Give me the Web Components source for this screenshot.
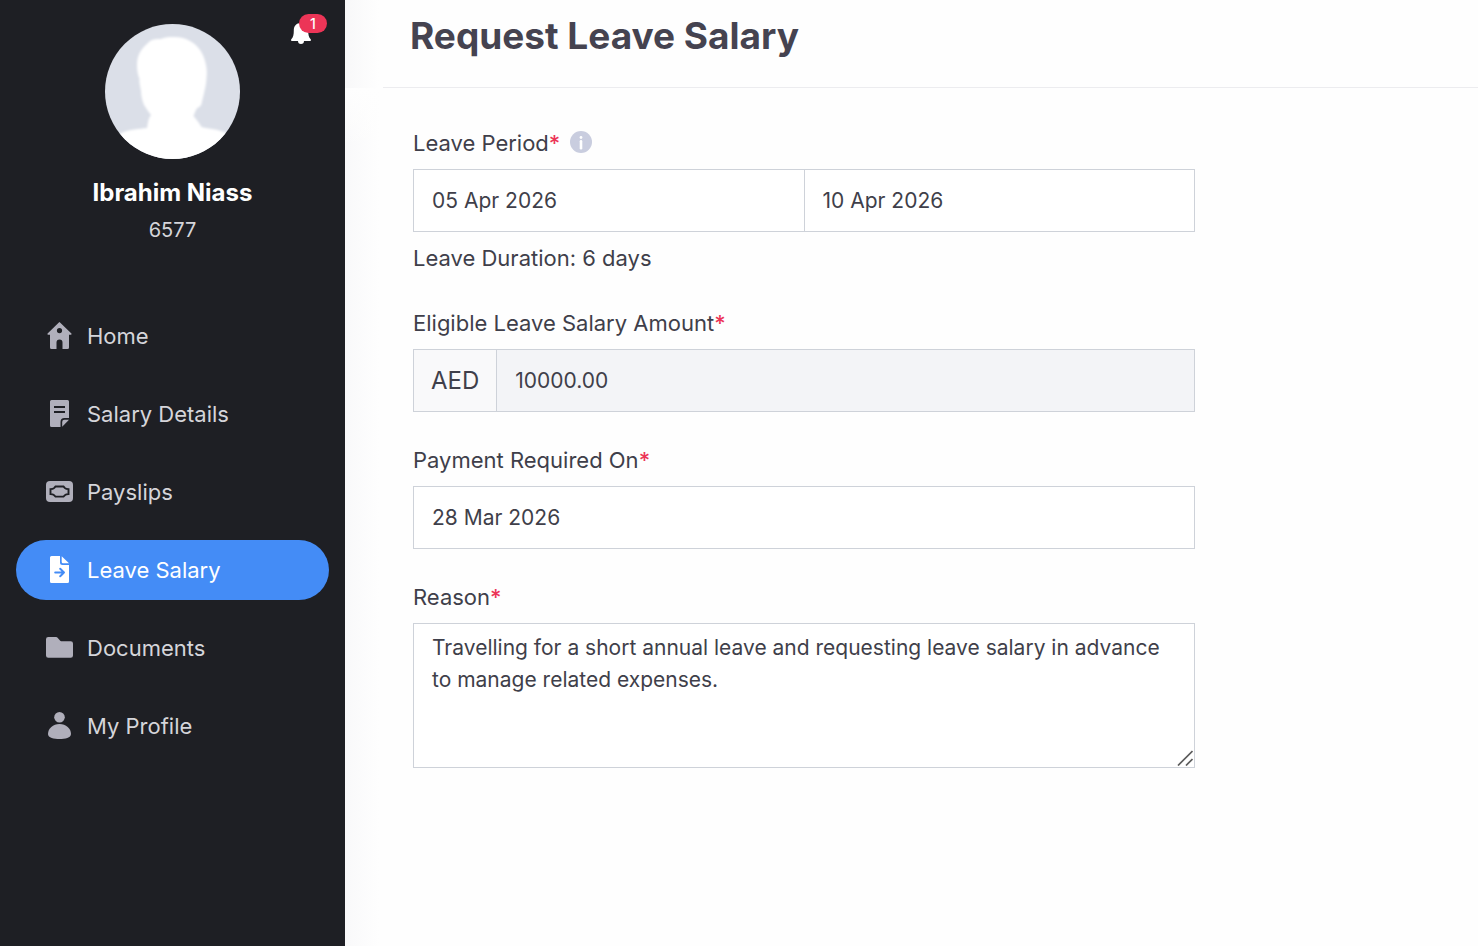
<!DOCTYPE html>
<html lang="en">
<head>
<meta charset="utf-8">
<title>Request Leave Salary</title>
<style>
  body { margin: 0; font-family: Inter, "Liberation Sans", sans-serif; color: #3f3f4a; background: #fefefe; }
</style>
</head>
<body>
<leave-app></leave-app>
<script>
const icons = {
  home: '<path fill-rule="evenodd" d="M13.500 0 25.400 11.600c.5.6.2 1.200-.5 1.200H23V25.500a1.500 1.500 0 0 1-1.500 1.500h-5V20.600a3 3 0 0 0-6 0V27h-5A1.500 1.500 0 0 1 4 25.500V12.800H2.100c-.7 0-1-.6-.5-1.200L12.600.8zM13.500 6a2.600 2.600 0 1 0 0 5.200 2.600 2.600 0 0 0 0-5.200z"/>',
  note: '<path fill-rule="evenodd" d="M5.500 0h16A1.500 1.500 0 0 1 23 1.500V18h-4.500a4 4 0 0 0-4 4v5h-9A1.500 1.500 0 0 1 4 25.500v-24A1.500 1.500 0 0 1 5.500 0zM8 6v1.900h11V6zm0 5v1.900h11V11z"/><path d="M16.200 26.800V22a2.200 2.200 0 0 1 2.200-2.200H23z"/>',
  pay: '<rect y="3" width="27" height="21" rx="4"/><path d="M9.500 8.500h8l1.500 1.600c.8.8 1.700 1 3.500 1v5c-1.800 0-2.700.2-3.500 1l-1.500 1.500h-8L8 17.100c-.8-.8-1.700-1-3.500-1v-5c1.800 0 2.700-.2 3.500-1z" fill="none" stroke="#1e1f24" stroke-width="1.900"/>',
  leave: '<path d="M5.500 0H14v6.500A2.500 2.500 0 0 0 16.500 9H23v16.500a1.500 1.500 0 0 1-1.500 1.500h-16A1.500 1.500 0 0 1 4 25.500v-24A1.500 1.500 0 0 1 5.500 0z"/><path d="M15.700.3 23 7.300h-6a1.300 1.300 0 0 1-1.300-1.300z"/><path d="M9.200 16.500H18m-3.800-3.700 3.800 3.700-3.800 3.700" fill="none" stroke="#448cf6" stroke-width="2" stroke-linecap="round" stroke-linejoin="round"/>',
  folder: '<path d="M2.300 3H10c.8 0 1.300.3 1.800.9L14 6.600c.3.400.7.600 1.200.600h9.500A2.300 2.300 0 0 1 27 9.500v12a2.300 2.300 0 0 1-2.300 2.300H2.300A2.300 2.300 0 0 1 0 21.500V5.300A2.300 2.300 0 0 1 2.300 3z"/>',
  user: '<circle cx="13.500" cy="5.300" r="5.300"/><path d="M13.500 12C20 12 25 16.500 25 22c0 3.800-6 5-11.500 5S2 25.800 2 22c0-5.500 5-10 11.500-10z"/>'
};

class NavItem extends HTMLElement {
  connectedCallback() {
    this.attachShadow({ mode: 'open' }).innerHTML = `
      <style>
        :host { display: block; }
        a { display: flex; align-items: center; gap: 14px; height: 60px; padding: 0 30px; border-radius: 30px;
            color: #d5d5da; font-size: 22px; text-decoration: none; }
        svg { width: 27px; height: 27px; margin-bottom: 1px; flex: none; fill: #b0afbb; overflow: visible; }
        :host([current]) a { background: #448cf6; color: #fff; }
        :host([current]) svg { fill: #fff; }
      </style>
      <a href="#"${this.hasAttribute('current') ? ' aria-current="page"' : ''}><svg viewBox="0 0 27 27" aria-hidden="true">${icons[this.getAttribute('icon')]}</svg><slot></slot></a>`;
  }
}

class UserCard extends HTMLElement {
  connectedCallback() {
    this.attachShadow({ mode: 'open' }).innerHTML = `
      <style>
        :host { display: flex; flex-direction: column; align-items: center; position: relative; padding-top: 24px; }
        .avatar { width: 135px; height: 135px; }
        .name { margin-top: 18px; font-size: 24px; line-height: 32px; font-weight: 700; color: #fff; }
        .code { margin-top: 7px; font-size: 20px; line-height: 28px; color: #d5d5da; }
        button { position: absolute; top: 14px; right: 18px; width: 37px; height: 31px; border: 0; padding: 0; background: none; font: inherit; }
        .bell { position: absolute; left: 1px; top: 9px; width: 20px; height: 21px; }
        .badge { position: absolute; right: 0; top: 0; width: 28px; height: 19px; border-radius: 10px;
                 background: #ec3557; color: #fff; font-size: 14px; line-height: 19px; font-weight: 500; text-align: center; }
      </style>
      <svg class="avatar" viewBox="0 0 135 135" aria-hidden="true">
        <defs><clipPath id="c"><circle cx="67.500" cy="67.500" r="67.500"/></clipPath>
        <filter id="s" x="-10%" y="-10%" width="120%" height="120%"><feGaussianBlur stdDeviation="0.800"/></filter></defs>
        <g clip-path="url(#c)"><rect width="135" height="135" fill="#dbdfe8"/>
        <path filter="url(#s)" fill="#fff" d="M67 13c7-.5 13 1 18 4 9 5 14 13 16 24 1 5 1 8 .5 13-.2 5-1 9-2 13-1 5-2 8-3 13-1 3-3 3-5 5-1 2-2 4-3 7 3 4 6 7 8 11 8 2 16 2 25 6l20 30H-3l19-30c9-4 18-4 26-5 1-5 1-9 4-13-3-4-5-7-7-10-2-5-3-10-3-14-1-6-2-9-1.500-12-2-5-2.500-9-2.500-14 0-10 4-16 11-22 3-4 8-4 13-4 3-1.500 7-2 11-2z"/></g>
      </svg>
      <span class="name"><slot name="name"></slot></span>
      <span class="code"><slot name="code"></slot></span>
      <button type="button" aria-label="Notifications">
        <svg class="bell" viewBox="0 0 20 21" fill="#fff" aria-hidden="true"><path d="M10 0c5 0 7.200 3.300 7.200 7.500 0 4 .5 6.500 2.300 8.500.9 1 .4 2-.7 2H13a3 3 0 0 1-6 0H1.200c-1.100 0-1.600-1-.7-2 1.800-2 2.300-4.500 2.300-8.500C2.800 3.300 5 0 10 0z"/></svg>
        <span class="badge">1</span>
      </button>`;
  }
}

class SideBar extends HTMLElement {
  connectedCallback() {
    this.attachShadow({ mode: 'open' }).innerHTML = `
      <style>
        :host { display: block; background: #1e1f24; }
        nav { display: grid; gap: 18px; padding: 0 16px; margin-top: 62px; }
      </style>
      <slot></slot>
      <nav>
        <nav-item icon="home">Home</nav-item>
        <nav-item icon="note">Salary Details</nav-item>
        <nav-item icon="pay">Payslips</nav-item>
        <nav-item icon="leave" current>Leave Salary</nav-item>
        <nav-item icon="folder">Documents</nav-item>
        <nav-item icon="user">My Profile</nav-item>
      </nav>`;
  }
}

class LeaveForm extends HTMLElement {
  connectedCallback() {
    this.attachShadow({ mode: 'open' }).innerHTML = `
      <style>
        :host { display: block; }
        form { display: grid; gap: 31px; max-width: 782px; }
        .head { display: flex; align-items: flex-start; gap: 10px; margin-bottom: 9px; }
        label, .hint { font-size: 22px; line-height: 34px; color: #3f3f4a; }
        b { color: #ec3557; font-weight: 500; }
        .row { display: flex; }
        input, textarea { box-sizing: border-box; display: block; width: 100%; min-width: 0; margin: 0; padding: 0 18px; border: 1px solid #ced2d9;
            border-radius: 0; background: #fff; color: #3f3f4a; font: 400 21px/32px Inter, "Liberation Sans", sans-serif; outline: 0; }
        input { height: 63px; }
        .row input + input { margin-left: -1px; }
        input[readonly] { background: #f3f4f7; }
        .unit { display: flex; align-items: center; padding: 0 17px; border: 1px solid #ced2d9; border-right: 0; background: #f9f9fa; font-size: 24px; }
        .hint { margin: 9px 0 0; }
        .area { position: relative; }
        textarea { height: 145px; padding-top: 8px; resize: none; }
        .grip { position: absolute; right: 2px; bottom: 2px; width: 16px; height: 16px; }
        .info { width: 22px; height: 22px; margin-top: 5px; }
      </style>
      <form>
        <div>
          <div class="head"><label for="from">Leave Period<b>*</b></label>
            <svg class="info" viewBox="0 0 22 22" role="img" aria-label="Information"><circle cx="11" cy="11" r="11" fill="#c9cddf"/><circle cx="11" cy="6.500" r="1.400" fill="#fff"/><path d="M11 10.200v7" stroke="#fff" stroke-width="2.600" stroke-linecap="round"/></svg>
          </div>
          <div class="row"><input id="from" value="05 Apr 2026"><input aria-label="Leave period end" value="10 Apr 2026"></div>
          <p class="hint">Leave Duration: 6 days</p>
        </div>
        <div>
          <div class="head"><label for="amount">Eligible Leave Salary Amount<b>*</b></label></div>
          <div class="row"><span class="unit">AED</span><input id="amount" readonly value="10000.00"></div>
        </div>
        <div>
          <div class="head"><label for="pay">Payment Required On<b>*</b></label></div>
          <input id="pay" value="28 Mar 2026">
        </div>
        <div>
          <div class="head"><label for="reason">Reason<b>*</b></label></div>
          <div class="area"><textarea id="reason">Travelling for a short annual leave and requesting leave salary in advance to manage related expenses.</textarea>
            <svg class="grip" viewBox="0 0 16 16" stroke="#5c5c5c" stroke-width="1.700" aria-hidden="true"><path d="M1 15.500 15.500 1M9 15.500l6.500-6.500"/></svg></div>
        </div>
      </form>`;
  }
}

class LeaveApp extends HTMLElement {
  connectedCallback() {
    this.attachShadow({ mode: 'open' }).innerHTML = `
      <style>
        :host { display: grid; grid-template-columns: 345px minmax(0, 1fr); min-height: 100vh; }
        main { display: flex; flex-direction: column; }
        header { padding-left: 38px; background: linear-gradient(90deg, #f8f8f9, #fefefe 34px); }
        h1 { margin: 0; padding: 10px 27px 25px; border-bottom: 1px solid #ececef; font-size: 37px; line-height: 52px; font-weight: 700; color: #454350; }
        .body { flex: 1; padding: 38px 68px; background: linear-gradient(#fefefe, #fefefe00 60px), linear-gradient(90deg, #f9f9fa, #fefefe 34px); }
      </style>
      <side-bar><user-card><span slot="name">Ibrahim Niass</span><span slot="code">6577</span></user-card></side-bar>
      <main>
        <header><h1>Request Leave Salary</h1></header>
        <div class="body"><leave-form></leave-form></div>
      </main>`;
  }
}

customElements.define('nav-item', NavItem);
customElements.define('user-card', UserCard);
customElements.define('side-bar', SideBar);
customElements.define('leave-form', LeaveForm);
customElements.define('leave-app', LeaveApp);
</script>
</body>
</html>
